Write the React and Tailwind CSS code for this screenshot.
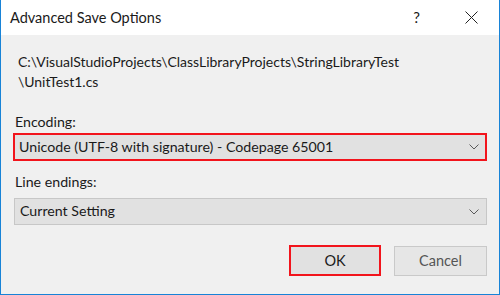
import React from 'react';

const font = { fontFamily: 'Lato, "Open Sans", sans-serif' };

const Chevron = () => (
  <svg width="10" height="6" viewBox="0 0 10 6" className="shrink-0">
    <path d="M0.5 0.5 L5 5 L9.5 0.5" fill="none" stroke="#5a5a5a" strokeWidth="1" />
  </svg>
);

const Select = ({ value, highlighted }) => (
  <div
    className={
      highlighted
        ? 'h-[28px] flex items-center justify-between pl-[4px] pr-[6px] bg-[#e1e1e1] border-2 border-[#f2141c]'
        : 'h-[27px] flex items-center justify-between pl-[5px] pr-[7px] bg-[#e1e1e1] border border-[#c7c7c7]'
    }
  >
    <span className="text-[14.2px] text-[#1a1a1a] leading-none">{value}</span>
    <Chevron />
  </div>
);

export default function App() {
  return (
    <div className="w-[500px] h-[295px] flex flex-col border-x border-b border-[#1883d7] bg-[#f0f0f0]" style={font}>
      <div className="h-[35px] bg-white flex items-center pl-[9px] pr-[21px] shrink-0">
        <span className="text-[14.5px] text-[#1a1a1a] flex-1">Advanced Save Options</span>
        <span className="text-[15px] text-[#1a1a1a] mr-[45px]">?</span>
        <svg width="13" height="13" viewBox="0 0 13 13">
          <path d="M0.5 0.5 L12.5 12.5 M12.5 0.5 L0.5 12.5" stroke="#222" strokeWidth="1" fill="none" />
        </svg>
      </div>
      <div className="flex-1 flex flex-col px-[12px] pt-[17px]">
        <div className="pl-[5px] text-[14px] leading-[20px] text-[#1a1a1a]">
          <div>C:\VisualStudioProjects\ClassLibraryProjects\StringLibraryTest</div>
          <div>\UnitTest1.cs</div>
        </div>
        <div className="mt-[20px] pl-[2px] text-[14.2px] leading-[20px] text-[#1a1a1a]">Encoding:</div>
        <div className="mt-[1px]">
          <Select value="Unicode (UTF-8 with signature) - Codepage 65001" highlighted />
        </div>
        <div className="mt-[11px] pl-[2px] text-[14.2px] leading-[20px] text-[#1a1a1a]">Line endings:</div>
        <div className="mt-[6px] ml-[1px]">
          <Select value="Current Setting" />
        </div>
        <div className="mt-[20px] flex justify-end gap-[13px]">
          <button className="w-[92px] h-[31px] bg-[#e1e1e1] border-2 border-[#f2141c] text-[14.5px] text-[#1a1a1a]">OK</button>
          <button className="w-[93px] h-[30px] mt-[1px] bg-[#e6e6e6] border border-[#c9c9c9] text-[14.5px] text-[#555]">Cancel</button>
        </div>
      </div>
    </div>
  );
}
